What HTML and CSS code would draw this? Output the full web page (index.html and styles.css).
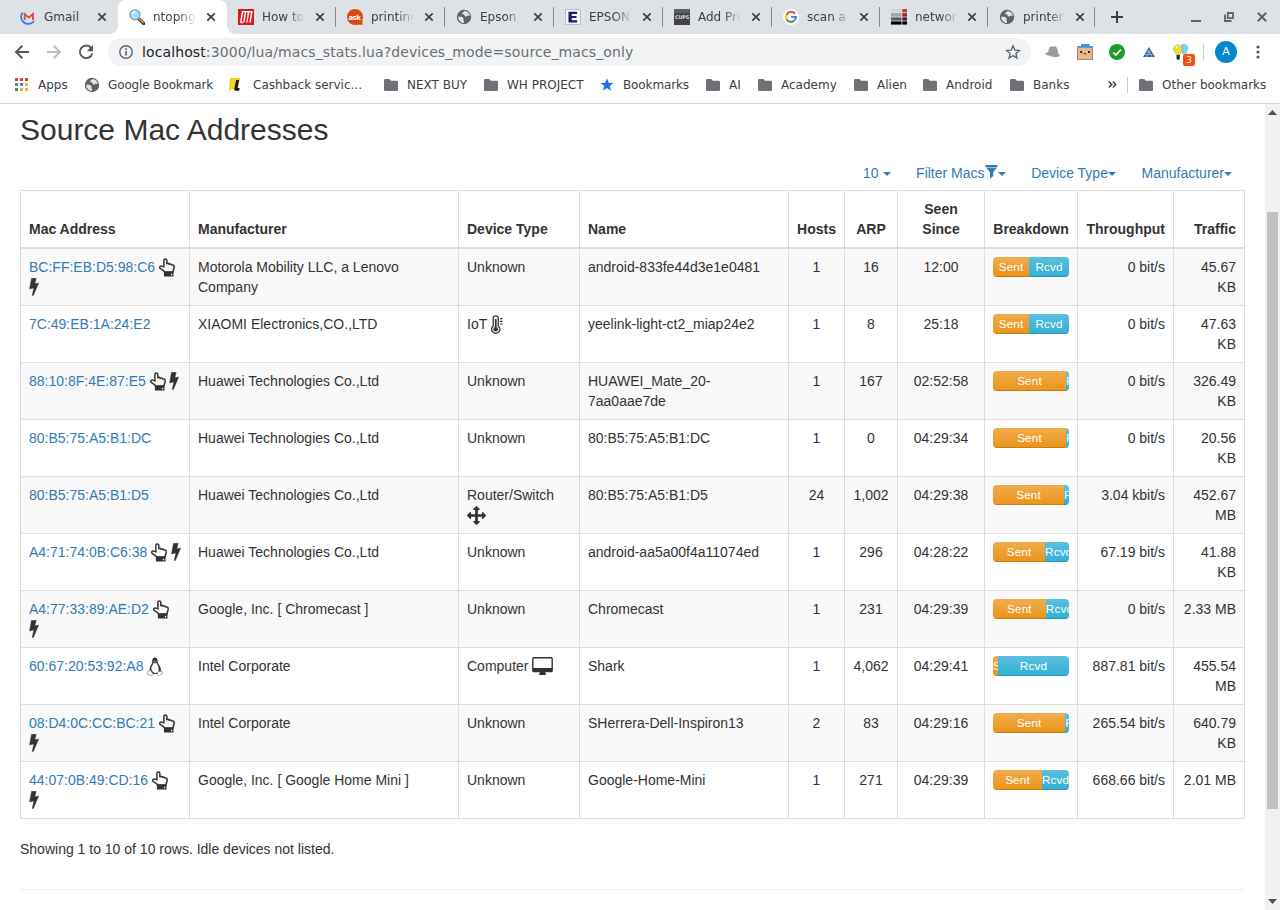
FILE: index.html
```html
<!DOCTYPE html>
<html lang="en">
<head>
<meta charset="utf-8">
<title>ntopng</title>
<link rel="stylesheet" href="styles.css">
</head>
<body>
<svg class="defs" aria-hidden="true">
  <symbol id="close" viewBox="0 0 10 10"><path d="M1.300 1.300l7.400 7.400M8.700 1.300L1.300 8.700" stroke="#3c4043" stroke-width="1.700"/></symbol>
  <symbol id="globe" viewBox="0 0 16 16"><circle cx="8" cy="8" r="7.200" fill="#5f6368"/><path d="M2.300 7.600C4 8.200 5.700 7.600 7 8.700c1.300 1-.2 2 .8 3 .5.7.2 1.700-.3 2.300C4.500 13.600 2 11 2.300 7.600zM8.500 2c-.2 1.200-2 1-2.300 2.200-.3 1 1 1 1.800 1.300.9.4.3 1.900 1.600 2.100 1.300.2 1.200-1 2.300-1.100.8 0 1.300.2 2 .5C13.500 4.200 11.300 2.200 8.500 2z" fill="#e4e6e9"/></symbol>
  <symbol id="folder" viewBox="0 0 14 12"><path d="M1.300 0h4l1.500 1.700h6q1.200 0 1.200 1.200v7.800q0 1.300-1.300 1.300H1.300Q0 12 0 10.700V1.300Q0 0 1.300 0z" fill="#6e7175"/></symbol>
  <symbol id="bolt" viewBox="0 0 10 18"><path d="M2.500.300h4.700L5.900 5.700l3.800-.6-5.300 12.300-1.200.2 1.600-7.700-4.300 1z" fill="#333" stroke="#333" stroke-width=".4" stroke-linejoin="round"/></symbol>
  <symbol id="hand" viewBox="0 0 16 19"><path d="M5.500 14C5.200 12.300 3.200 11.700 1.500 10.700.2 9.900.5 7.900 2.200 7.900L4.900 8.900V2.300C4.900.4 7.800.4 7.800 2.300v3.400c1-.5 2-.3 2.500.6 1-.5 2-.1 2.500.7 1.400-.4 2.400.3 2.400 1.700 0 2.300-1.100 3.300-1.200 5.300z" fill="none" stroke="#333" stroke-width="1.500" stroke-linejoin="round"/><path d="M4.900 13.600h9.600v4.900H4.900z" fill="#333"/><circle cx="12.600" cy="16.600" r=".8" fill="#fff"/></symbol>
  <symbol id="desktop" viewBox="0 0 1920 1664"><path d="M1792 992v-832q0-13-9.500-22.500t-22.500-9.500h-1600q-13 0-22.500 9.500t-9.500 22.500v832q0 13 9.500 22.500t22.500 9.500h1600q13 0 22.500-9.500t9.500-22.500zm128-832v1088q0 66-47 113t-113 47h-544q0 37 16 77.500t32 71 16 43.500q0 26-19 45t-45 19h-512q-26 0-45-19t-19-45q0-14 16-44t32-70 16-78h-544q-66 0-113-47t-47-113v-1088q0-66 47-113t113-47h1600q66 0 113 47t47 113z" fill="#333"/></symbol>
  <symbol id="arrows" viewBox="0 0 1792 1792"><path d="M1792 896q0 26-19 45l-256 256q-19 19-45 19t-45-19-19-45v-128h-384v384h128q26 0 45 19t19 45-19 45l-256 256q-19 19-45 19t-45-19l-256-256q-19-19-19-45t19-45 45-19h128v-384h-384v128q0 26-19 45t-45 19-45-19l-256-256q-19-19-19-45t19-45l256-256q19-19 45-19t45 19 19 45v128h384v-384h-128q-26 0-45-19t-19-45 19-45l256-256q19-19 45-19t45 19l256 256q19 19 19 45t-19 45-45 19h-128v384h384v-128q0-26 19-45t45-19 45 19l256 256q19 19 19 45z" fill="#333"/></symbol>
  <symbol id="thermo" viewBox="0 0 12 19"><path d="M2.200 11V3.300C2.200 0 7.300 0 7.300 3.300V11c4 4-.2 7.300-2.500 7.300S-1.800 15 2.200 11z" fill="none" stroke="#333" stroke-width="1.300"/><circle cx="4.750" cy="14.200" r="2.300" fill="#333"/><path d="M4.750 4v9" stroke="#333" stroke-width="1.800"/><path d="M9 3.600h2.500M9 6.300h2.500M9 9h2.500" stroke="#333" stroke-width="1.200"/></symbol>
  <symbol id="tux" viewBox="0 0 16 19"><path d="M5.300 3.500C5.200-.4 10.300-.5 10.500 3.200c.1 2.800 1.100 3.500 2.500 6.300 1.600 3 1 4.600-.3 5.600L10 17H6l-3.200-3.500c-.5-2 .5-4.500 1.700-6.400.8-1.200.8-2 .8-3.600z" fill="#333"/><path d="M6.300 6q1.700 1 3.400-.2c.6 2.300 2.400 4.300 2 7.200-.3 2.400-2 3.300-3.900 3.200C6.100 15.200 4.200 13.500 4.300 11.500 4.400 9.500 6 8.300 6.300 6z" fill="#fff"/><path d="M6.400 4.700l1.500-.7 1.600.7-1.600 1z" fill="#aaa"/><path d="M3 13.200l3 3.700-1 1.600-4.300-.8v-3.200zM11 14.500l4.200 0 .4 1.900-4 2.200-1.200-1z" fill="#fff" stroke="#888" stroke-width=".7"/></symbol>
</svg>

<header class="browser">
  <div class="tabstrip">
    <div class="tab"><svg class="fav" viewBox="0 0 16 16"><path d="M2.500 3.500A7 7 0 1 0 14 12" fill="none" stroke="#3478e5" stroke-width="1.700"/><path d="M4.700 11V5l4.100 3.600L13 5v6" fill="none" stroke="#d94a3f" stroke-width="1.900"/></svg><span class="title">Gmail</span><svg class="x"><use href="#close"/></svg></div>
    <div class="tab active"><svg class="fav" viewBox="0 0 16 16"><path d="M10 10l5 4.800" stroke="#4a3a2c" stroke-width="3.200" stroke-linecap="round"/><path d="M10 9.500l4.500 4.500" stroke="#e6a545" stroke-width="1.500"/><circle cx="6" cy="5.800" r="5" fill="#a8defa" stroke="#6ba3c4" stroke-width="1.300"/><path d="M3 5q1-2.500 3.500-2.500" stroke="#fff" stroke-width="1.300" fill="none"/></svg><span class="title">ntopng</span><svg class="x"><use href="#close"/></svg></div>
    <div class="tab"><svg class="fav" viewBox="0 0 16 16"><path d="M0 0h16v16H0z" fill="#d41c22"/><path d="M2.700 13.500L4.500 2.700h9.300L12 13.500M5.800 13.500L7.500 3M8.900 13.500L10.600 3M2.700 13.500H5" fill="none" stroke="#fff" stroke-width="1.400"/></svg><span class="title">How to</span><svg class="x"><use href="#close"/></svg></div>
    <div class="tab sep"><svg class="fav" viewBox="0 0 16 16"><path d="M8 0a8 8 0 1 1 0 16A8 8 0 0 1 8 0zM9 10h6.500v5.800H8z" fill="#d94a08"/><text x="1.400" y="10.600" class="asktext">ask</text></svg><span class="title">printing</span><svg class="x"><use href="#close"/></svg></div>
    <div class="tab sep"><svg class="fav"><use href="#globe"/></svg><span class="title">Epson - c</span><svg class="x"><use href="#close"/></svg></div>
    <div class="tab sep"><svg class="fav" viewBox="0 0 16 16"><path d="M.5.500h15v15H.500z" fill="#f4f5fa" stroke="#b9bdd0"/><path d="M3.500 2.700h8.500v2.200H6.700V7h4.800v2.100H6.700v2.200h5.400v2.300H3.500z" fill="#151b78"/></svg><span class="title">EPSON</span><svg class="x"><use href="#close"/></svg></div>
    <div class="tab sep"><svg class="fav" viewBox="0 0 16 16"><path d="M0 0h16v16H0z" fill="#444"/><path d="M0 0h16v4H0z" fill="#5d5d5d"/><text x="1" y="9.600" class="cupstext">CUPS</text></svg><span class="title">Add Prin</span><svg class="x"><use href="#close"/></svg></div>
    <div class="tab sep narrow"><svg class="fav" viewBox="0 0 16 16"><circle cx="8" cy="8" r="8" fill="#fff"/><g fill="none" stroke-width="2"><path d="M12 4.500A5 5 0 0 0 3.600 5.800" stroke="#ea4335"/><path d="M3.600 5.800a5 5 0 0 0 0 4.400" stroke="#fbbc05"/><path d="M3.600 10.200A5 5 0 0 0 11.400 11.600" stroke="#34a853"/><path d="M11.400 11.600A5 5 0 0 0 13 8H8" stroke="#4285f4"/></g></svg><span class="title">scan a d</span><svg class="x"><use href="#close"/></svg></div>
    <div class="tab sep narrow"><svg class="fav" viewBox="0 0 16 16"><path d="M0 0h10.500v3.400H0z" fill="#d5d5d8"/><path d="M0 4.200h10.500v3.400H0z" fill="#a3a3a5"/><path d="M0 8.400h10.500v3.200H0z" fill="#5b5b5d"/><path d="M0 12.400h10.500v3.200H0z" fill="#000"/><path d="M11.300 0H16v3.400h-4.700z" fill="#c43b3e"/><path d="M11.300 4.200H16v3.400h-4.700z" fill="#912c30"/><path d="M11.300 8.400H16v3.200h-4.700z" fill="#4e181b"/><path d="M11.300 12.400H16v3.200h-4.700z" fill="#000"/></svg><span class="title">network</span><svg class="x"><use href="#close"/></svg></div>
    <div class="tab sep narrow last"><svg class="fav"><use href="#globe"/></svg><span class="title">printers</span><svg class="x"><use href="#close"/></svg></div>
    <svg class="plus" viewBox="0 0 12 12"><path d="M6 0v12M0 6h12" stroke="#3c4043" stroke-width="2"/></svg>
    <div class="winctl">
      <svg viewBox="0 0 10 10"><path d="M0 9h10" stroke="#5f6368" stroke-width="2"/></svg>
      <svg viewBox="0 0 10 10"><path d="M3.800 1h5.200v5.200H3.800z" fill="none" stroke="#5f6368" stroke-width="1.800"/><path d="M1 2.500V9h6.500" fill="none" stroke="#5f6368" stroke-width="1.800"/></svg>
      <svg viewBox="0 0 10 10"><path d="M.8.800l8.400 8.400M9.200.800L.8 9.200" stroke="#5f6368" stroke-width="2"/></svg>
    </div>
  </div>

  <div class="toolbar">
    <svg class="nav" viewBox="0 0 16 16"><path d="M15 8H2.500M8.300 1.800L2 8l6.300 6.200" fill="none" stroke="#55595e" stroke-width="1.900"/></svg>
    <svg class="nav" viewBox="0 0 16 16"><path d="M1 8h12.500M7.700 1.800L14 8l-6.300 6.200" fill="none" stroke="#bbbdc0" stroke-width="1.900"/></svg>
    <svg class="nav" viewBox="0 0 16 16"><path d="M13.200 4A6.300 6.300 0 1 0 14.300 9.500" fill="none" stroke="#55595e" stroke-width="1.900"/><path d="M15 1v6.200H8.800z" fill="#55595e"/></svg>
    <div class="omnibox">
      <svg class="info" viewBox="0 0 14 14"><circle cx="7" cy="7" r="6.200" fill="none" stroke="#5f6368" stroke-width="1.400"/><path d="M7 3.200v1.700M7 6v4.600" stroke="#5f6368" stroke-width="1.600"/></svg>
      <span class="url"><b>localhost</b>:3000/lua/macs_stats.lua?devices_mode=source_macs_only</span>
      <svg class="star" viewBox="0 0 16 16"><path d="M8 1.800l1.800 4.300 4.600.4-3.500 3 1.100 4.600L8 11.600l-4 2.500 1.100-4.600-3.500-3 4.600-.4z" fill="none" stroke="#5f6368" stroke-width="1.300"/></svg>
    </div>
    <div class="exts">
      <svg viewBox="0 0 16 16"><path d="M3.300 8C3.500 3.500 5.500 1.700 8 2.700c3.500-1 5 1.300 5 6.800 2 .8 2.300 2.300.5 3-3 1-6 .7-8.500-.8C2 11.500 0 10.500.5 9z" fill="#9a9a9a"/></svg>
      <svg viewBox="0 0 16 16"><path d="M.500 2.500h15v13H.500z" fill="#e8b98f" stroke="#a58468"/><path d="M4 0h8.500v2.300H15v1.500H1.500V2.300H4z" fill="#3a8fd9"/><path d="M3.200 7h2v2h-2zM11 7h2v2h-2z" fill="#222"/><path d="M6.700 10q1.300-1 2.600 0" stroke="#333" fill="none"/></svg>
      <svg viewBox="0 0 16 16"><circle cx="8" cy="8" r="8" fill="#1f9b27"/><path d="M4.200 8.500l2.700 2.600 5-5.500" fill="none" stroke="#fff" stroke-width="1.700"/></svg>
      <svg viewBox="0 0 16 16"><path d="M8 3l6 10H2z" fill="#35669b"/><path d="M5.500 8h5M4 10.500h8M7 6l4 7M9 6l-4 7" stroke="#a9c5df" stroke-width=".7"/></svg>
      <div class="bulb"><svg viewBox="0 0 16 16"><path d="M8 1a4.400 4.400 0 1 1 6 6.500l-1 3h-3L8 8z" fill="#83cbed"/><path d="M.5 4.500a4.300 4.300 0 1 1 7.500 3.500l-1.300 3h-3L2 8.500Q.5 7 .5 4.500z" fill="#f3dc38" stroke="#c8a82c" stroke-width=".6"/><path d="M3.600 11h3.200v4l-1.600 1-1.600-1z" fill="#222"/><path d="M3 4l1.500-1.500" stroke="#fff" stroke-width="1.500"/></svg><span>3</span></div>
    </div>
    <div class="avatar">A</div>
    <svg class="kebab" viewBox="0 0 4 14"><circle cx="2" cy="2" r="1.600"/><circle cx="2" cy="7" r="1.600"/><circle cx="2" cy="12" r="1.600"/></svg>
  </div>

  <nav class="bookmarks">
    <a><svg class="apps" viewBox="0 0 13 13"><path d="M0 0h3v3H0zM5 0h3v3H5zM10 0h3v3h-3z" fill="#df3f34"/><path d="M0 5h3v3H0z" fill="#4c9f50"/><path d="M5 5h3v3H5z" fill="#3e7fe8"/><path d="M10 5h3v3h-3zM5 10h3v3H5zM10 10h3v3h-3z" fill="#efb32c"/><path d="M0 10h3v3H0z" fill="#3d9846"/></svg>Apps</a>
    <a class="tight"><svg class="g16"><use href="#globe"/></svg>Google Bookmark</a>
    <a><svg class="ell" viewBox="0 0 12 14"><path d="M1 0h10.500l-1 3L8 11H2.500L0 14z" fill="#f7d11d"/><path d="M7.200 2h2.900L8.600 10h2l-.4 2.700H6.200q-1.300-.3-.9-2z" fill="#171717"/></svg>Cashback servic...</a>
    <a><svg><use href="#folder"/></svg>NEXT BUY</a>
    <a><svg><use href="#folder"/></svg>WH PROJECT</a>
    <a class="tight book"><svg class="bstar" viewBox="0 0 14 14"><path d="M7 .3l1.700 4.500 4.900.2-3.900 3 1.400 4.800L7 10.100l-4.100 2.700L4.300 8 .4 5l4.900-.2z" fill="#1a73e8"/></svg>Bookmarks</a>
    <a><svg><use href="#folder"/></svg>AI</a>
    <a><svg><use href="#folder"/></svg>Academy</a>
    <a><svg><use href="#folder"/></svg>Alien</a>
    <a><svg><use href="#folder"/></svg>Android</a>
    <a><svg><use href="#folder"/></svg>Banks</a>
    <span class="more"><svg viewBox="0 0 9 7"><path d="M.8.500l3 3-3 3M4.800.500l3 3-3 3" fill="none" stroke="#3c4043" stroke-width="1.400"/></svg></span>
    <a class="other"><svg><use href="#folder"/></svg>Other bookmarks</a>
  </nav>
</header>

<div class="viewport">
  <main class="page">
    <h2>Source Mac Addresses</h2>
    <div class="filters">
      <a>10 <i class="caret"></i></a>
      <a>Filter Macs<svg class="funnel" viewBox="0 0 13 14"><path d="M.5 0h12v1.900H.500zM1 2.600h11L8.200 7.300V11L5 13.800V7.300z" fill="#337ab7"/></svg><i class="caret"></i></a>
      <a>Device Type<i class="caret"></i></a>
      <a>Manufacturer<i class="caret"></i></a>
    </div>
    <table class="macs">
      <colgroup><col class="c-mac"><col class="c-man"><col class="c-type"><col class="c-name"><col class="c-hosts"><col class="c-arp"><col class="c-seen"><col class="c-break"><col class="c-thr"><col class="c-traf"></colgroup>
      <thead><tr><th>Mac Address</th><th>Manufacturer</th><th>Device Type</th><th>Name</th><th class="mid">Hosts</th><th class="mid">ARP</th><th class="mid">Seen<br>Since</th><th class="mid">Breakdown</th><th class="end">Throughput</th><th class="end">Traffic</th></tr></thead>
      <tbody>
        <tr><td><a>BC:FF:EB:D5:98:C6</a> <svg class="hand"><use href="#hand"/></svg><br><svg class="bolt"><use href="#bolt"/></svg></td><td>Motorola Mobility LLC, a Lenovo Company</td><td>Unknown</td><td>android-833fe44d3e1e0481</td><td>1</td><td>16</td><td>12:00</td><td><div class="bar"><span class="sent" style="width:47.500%">Sent</span><span class="rcvd">Rcvd</span></div></td><td>0 bit/s</td><td>45.67 KB</td></tr>
        <tr><td><a>7C:49:EB:1A:24:E2</a></td><td>XIAOMI Electronics,CO.,LTD</td><td>IoT <svg class="thermo"><use href="#thermo"/></svg></td><td>yeelink-light-ct2_miap24e2</td><td>1</td><td>8</td><td>25:18</td><td><div class="bar"><span class="sent" style="width:47.500%">Sent</span><span class="rcvd">Rcvd</span></div></td><td>0 bit/s</td><td>47.63 KB</td></tr>
        <tr><td><a>88:10:8F:4E:87:E5</a> <svg class="hand"><use href="#hand"/></svg> <svg class="bolt"><use href="#bolt"/></svg></td><td>Huawei Technologies Co.,Ltd</td><td>Unknown</td><td>HUAWEI_Mate_20-7aa0aae7de</td><td>1</td><td>167</td><td>02:52:58</td><td><div class="bar"><span class="sent" style="width:96%">Sent</span><span class="rcvd">Rcvd</span></div></td><td>0 bit/s</td><td>326.49 KB</td></tr>
        <tr><td><a>80:B5:75:A5:B1:DC</a></td><td>Huawei Technologies Co.,Ltd</td><td>Unknown</td><td>80:B5:75:A5:B1:DC</td><td>1</td><td>0</td><td>04:29:34</td><td><div class="bar"><span class="sent" style="width:96%">Sent</span><span class="rcvd">Rcvd</span></div></td><td>0 bit/s</td><td>20.56 KB</td></tr>
        <tr><td><a>80:B5:75:A5:B1:D5</a></td><td>Huawei Technologies Co.,Ltd</td><td>Router/Switch<br><svg class="arrows"><use href="#arrows"/></svg></td><td>80:B5:75:A5:B1:D5</td><td>24</td><td>1,002</td><td>04:29:38</td><td><div class="bar"><span class="sent" style="width:93.500%">Sent</span><span class="rcvd">Rcvd</span></div></td><td>3.04 kbit/s</td><td>452.67 MB</td></tr>
        <tr><td><a>A4:71:74:0B:C6:38</a> <svg class="hand"><use href="#hand"/></svg> <svg class="bolt"><use href="#bolt"/></svg></td><td>Huawei Technologies Co.,Ltd</td><td>Unknown</td><td>android-aa5a00f4a11074ed</td><td>1</td><td>296</td><td>04:28:22</td><td><div class="bar"><span class="sent" style="width:68.500%">Sent</span><span class="rcvd">Rcvd</span></div></td><td>67.19 bit/s</td><td>41.88 KB</td></tr>
        <tr><td><a>A4:77:33:89:AE:D2</a> <svg class="hand"><use href="#hand"/></svg><br><svg class="bolt"><use href="#bolt"/></svg></td><td>Google, Inc. [ Chromecast ]</td><td>Unknown</td><td>Chromecast</td><td>1</td><td>231</td><td>04:29:39</td><td><div class="bar"><span class="sent" style="width:69.500%">Sent</span><span class="rcvd">Rcvd</span></div></td><td>0 bit/s</td><td>2.33 MB</td></tr>
        <tr><td><a>60:67:20:53:92:A8</a> <svg class="hand"><use href="#tux"/></svg></td><td>Intel Corporate</td><td>Computer <svg class="desktop"><use href="#desktop"/></svg></td><td>Shark</td><td>1</td><td>4,062</td><td>04:29:41</td><td><div class="bar"><span class="sent" style="width:6.500%">Sent</span><span class="rcvd">Rcvd</span></div></td><td>887.81 bit/s</td><td>455.54 MB</td></tr>
        <tr><td><a>08:D4:0C:CC:BC:21</a> <svg class="hand"><use href="#hand"/></svg><br><svg class="bolt"><use href="#bolt"/></svg></td><td>Intel Corporate</td><td>Unknown</td><td>SHerrera-Dell-Inspiron13</td><td>2</td><td>83</td><td>04:29:16</td><td><div class="bar"><span class="sent" style="width:95%">Sent</span><span class="rcvd">Rcvd</span></div></td><td>265.54 bit/s</td><td>640.79 KB</td></tr>
        <tr><td><a>44:07:0B:49:CD:16</a> <svg class="hand"><use href="#hand"/></svg><br><svg class="bolt"><use href="#bolt"/></svg></td><td>Google, Inc. [ Google Home Mini ]</td><td>Unknown</td><td>Google-Home-Mini</td><td>1</td><td>271</td><td>04:29:39</td><td><div class="bar"><span class="sent" style="width:64.500%">Sent</span><span class="rcvd">Rcvd</span></div></td><td>668.66 bit/s</td><td>2.01 MB</td></tr>
      </tbody>
    </table>
    <p class="summary">Showing 1 to 10 of 10 rows. Idle devices not listed.</p>
    <hr>
  </main>
  <div class="scroll">
    <svg viewBox="0 0 9 5"><path d="M0 5l4.500-5L9 5z"/></svg>
    <div class="track"><div class="thumb"></div></div>
    <svg viewBox="0 0 9 5"><path d="M0 0h9L4.500 5z"/></svg>
  </div>
</div>
</body>
</html>
```

FILE: styles.css
```css
* { box-sizing: border-box; }
body {
  margin: 0;
  height: 910px;
  overflow: hidden;
  display: flex;
  flex-direction: column;
  background: #fff;
  color: #333;
  font: 14px/20px "Liberation Sans", Arial, sans-serif;
}
svg { flex: none; }
.defs { position: absolute; width: 0; height: 0; }

/* Browser window */
.browser {
  height: 104px;
  flex: none;
  border-bottom: 1px solid #d5d6d8;
  font: 12px/16px "DejaVu Sans", sans-serif;
  color: #3c4043;
}
.tabstrip {
  height: 34px;
  display: flex;
  align-items: center;
  padding-left: 9px;
  background: #dee1e6;
}
.tab {
  position: relative;
  width: 109px;
  height: 34px;
  flex: none;
  display: flex;
  align-items: center;
  padding-left: 11px;
}
.tab.narrow { width: 108px; }
.tab.active { background: #fff; border-radius: 8px 8px 0 0; }
.tab.active::before, .tab.active::after {
  content: "";
  position: absolute;
  bottom: 0;
  width: 8px;
  height: 8px;
}
.tab.active::before { left: -8px; background: radial-gradient(circle at 0 0, transparent 7.500px, #fff 8px); }
.tab.active::after { right: -8px; background: radial-gradient(circle at 100% 0, transparent 7.500px, #fff 8px); }
.tab.sep::before, .tab.last::after {
  content: "";
  position: absolute;
  left: -1px;
  top: 7px;
  width: 1px;
  height: 20px;
  background: #85898e;
}
.tab.last::after { left: auto; right: 1px; }
.fav { width: 16px; height: 16px; }
.title {
  width: 43px;
  margin-left: 8px;
  overflow: hidden;
  white-space: nowrap;
  -webkit-mask-image: linear-gradient(to right, #000 60%, transparent 100%);
  mask-image: linear-gradient(to right, #000 60%, transparent 100%);
}
.tab:first-child .title { -webkit-mask-image: none; mask-image: none; }
.x { width: 10px; height: 10px; margin-left: 10px; }
.narrow .x { margin-left: 9px; }
.asktext { font: bold 7px "DejaVu Sans", sans-serif; letter-spacing: -.5px; fill: #fff; }
.cupstext { font: bold 5px "DejaVu Sans", sans-serif; letter-spacing: -.2px; fill: #ddd; }
.plus { width: 12px; height: 12px; margin-left: 15px; }
.winctl { display: flex; gap: 23px; margin: 0 13px 0 auto; }
.winctl svg { width: 10px; height: 10px; }

.toolbar { height: 36px; display: flex; align-items: center; padding-left: 14px; }
.nav { width: 16px; height: 16px; margin-right: 16px; }
.omnibox {
  width: 923px;
  height: 28px;
  margin-left: -2px;
  display: flex;
  align-items: center;
  padding: 0 10px 0 11px;
  border-radius: 14px;
  background: #f1f3f4;
}
.info { width: 14px; height: 14px; }
.url { flex: 1; margin-left: 9px; font-size: 14px; letter-spacing: .108px; color: #6a6e72; white-space: nowrap; }
.url b { font-weight: normal; color: #202124; }
.star { width: 16px; height: 16px; }
.exts { display: flex; gap: 16px; margin-left: 14px; }
.exts svg { width: 16px; height: 16px; display: block; }
.bulb { position: relative; }
.bulb span {
  position: absolute;
  left: 10px;
  top: 10px;
  width: 12px;
  height: 12px;
  border-radius: 2px;
  background: #f4500b;
  color: #fff;
  font-size: 9px;
  line-height: 12px;
  text-align: center;
}
.avatar {
  position: relative;
  width: 22px;
  height: 22px;
  margin-left: 26px;
  border-radius: 50%;
  background: #0288d1;
  color: #fff;
  font-size: 11px;
  line-height: 22px;
  text-align: center;
}
.avatar::before {
  content: "";
  position: absolute;
  left: -12px;
  top: 3px;
  width: 1px;
  height: 16px;
  background: #ccc;
}
.kebab { width: 4px; height: 14px; margin-left: 19px; fill: #55595e; }

.bookmarks {
  height: 33px;
  display: grid;
  grid-template-columns: 70px 144px 155px 100px 117px 105px 52px 96px 69px 87px 97px 20px 1fr;
  align-items: center;
  padding-left: 15px;
  padding-bottom: 4px;
}
.bookmarks a { display: flex; align-items: center; white-space: nowrap; }
.bookmarks .tight { letter-spacing: -.12px; }
.bookmarks .book { margin-left: -1px; }
.bookmarks a svg { width: 14px; height: 12px; margin-right: 9px; }
.bookmarks a .apps { width: 13px; height: 13px; margin-right: 10px; }
.bookmarks a .g16 { width: 16px; height: 16px; margin: 0 8px 0 -1px; }
.bookmarks a .ell { width: 12px; height: 14px; margin-right: 12px; }
.bookmarks a .bstar { height: 14px; }
.more svg { width: 9px; height: 7px; display: block; margin-left: 1px; }
.bookmarks .other { position: relative; padding-left: 12px; }
.other::before { content: ""; position: absolute; left: 0; top: 0; width: 1px; height: 16px; background: #ccc; }

/* Page */
.viewport { flex: 1; display: flex; min-height: 0; }
.page { flex: 1; padding: 9px 20px 0; overflow: hidden; }
.page h2 { margin: 0; font-size: 30px; line-height: 33px; font-weight: normal; }
.page a { color: #337ab7; }
.filters {
  display: flex;
  justify-content: flex-end;
  gap: 25.600px;
  padding-right: 13px;
  margin: 17px 0 7px;
  white-space: nowrap;
}
.caret {
  display: inline-block;
  vertical-align: middle;
  border-top: 4px solid;
  border-left: 4px solid transparent;
  border-right: 4px solid transparent;
}
.funnel { width: 13px; height: 14px; vertical-align: -1px; }

.macs { width: 1225px; table-layout: fixed; border-collapse: collapse; }
.c-mac { width: 169px; }
.c-man { width: 269px; }
.c-type { width: 121px; }
.c-name { width: 209px; }
.c-hosts { width: 56px; }
.c-arp { width: 53px; }
.c-seen { width: 87px; }
.c-break { width: 93px; }
.c-thr { width: 96px; }
.c-traf { width: 71px; }
.macs th, .macs td { border: 1px solid #ddd; padding: 8px; text-align: left; vertical-align: top; }
.macs th { vertical-align: bottom; border-bottom-width: 2px; }
.macs tbody tr { height: 57px; }
.macs tbody tr:nth-child(odd) { background: #f9f9f9; }
.macs td:first-child { white-space: nowrap; }
.macs td:nth-child(n+5):nth-child(-n+7), .macs .mid { text-align: center; }
.macs td:nth-child(n+9), .macs .end { text-align: right; }
.macs th.mid { padding-left: 0; padding-right: 0; }
.hand { width: 16px; height: 19px; vertical-align: -5px; }
.bolt { width: 10px; height: 18px; vertical-align: -4px; margin-left: -.5px; }
.thermo { width: 12px; height: 19px; vertical-align: -5px; }
.arrows { width: 19px; height: 19px; vertical-align: -5px; }
.desktop { width: 21px; height: 18px; vertical-align: -4px; }
.bar {
  display: flex;
  height: 20px;
  border-radius: 4px;
  overflow: hidden;
  color: #fff;
  font-size: 11.700px;
  letter-spacing: .15px;
  text-align: center;
}
.bar span { overflow: hidden; box-shadow: inset 0 -1px 0 rgba(0, 0, 0, .15); }
.sent { flex: none; background: linear-gradient(#f0ad4e, #eb9316); }
.rcvd { flex: 1; min-width: 0; background: linear-gradient(#5bc0de, #31b0d5); }
.summary { margin: 20px 0 30px; }
hr { margin: 0; border: 0; border-top: 1px solid #eee; }

.scroll {
  width: 15px;
  display: flex;
  flex-direction: column;
  align-items: center;
  background: #f1f1f1;
}
.scroll svg { width: 9px; height: 5px; margin: 6px 0; fill: #505050; }
.track { flex: 1; width: 11px; padding-top: 91px; }
.thumb { height: 597px; background: #c1c1c1; }
```
